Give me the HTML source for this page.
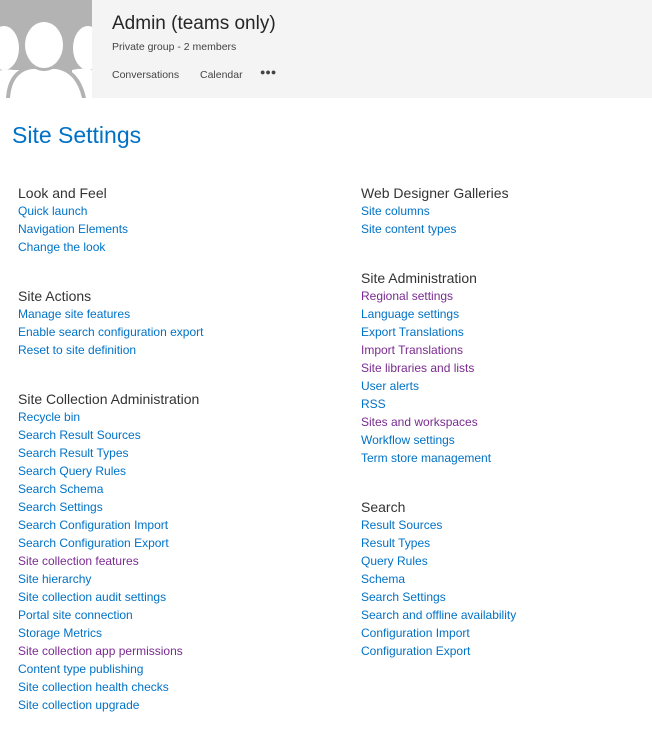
<!DOCTYPE html>
<html><head><meta charset="utf-8"><style>
body{margin:0;width:652px;height:732px;background:#fff;font-family:"Liberation Sans",sans-serif;position:relative;overflow:hidden}
.hdr{position:absolute;left:0;top:0;width:652px;height:98px;background:#f4f4f4}
.t{position:absolute;white-space:nowrap}
.sec{position:absolute;line-height:18px;font-size:12px;color:#0072c6}
.sec h{display:block;font-size:14px;color:#333;}
.sec div{white-space:nowrap}
.p{color:#7a2a90}
</style></head><body>
<div class="hdr"></div>
<svg style="position:absolute;left:0;top:0" width="92" height="98" viewBox="0 0 92 98">
<rect width="92" height="98" fill="#b3b3b3"/>
<ellipse cx="4" cy="48" rx="15" ry="22" fill="#fff"/>
<ellipse cx="88" cy="48" rx="15" ry="22" fill="#fff"/>
<path d="M-10 98 L-10 75 Q0 68 14 70 L20 70 L20 98Z" fill="#fff"/>
<path d="M72 98 L72 70 Q90 66 100 75 L100 98Z" fill="#fff"/>
<path d="M6 98 Q8 70 30 66 L58 66 Q80 70 86 98Z" fill="#b3b3b3"/>
<path d="M10 98 Q12 72 32 69 L56 69 Q76 72 82 98Z" fill="#fff"/>
<ellipse cx="44" cy="45" rx="22" ry="26" fill="#b3b3b3"/>
<ellipse cx="44" cy="45" rx="19" ry="23" fill="#fff"/>
</svg>
<div class="t" style="left:112px;top:13px;font-size:19px;color:#262626">Admin (teams only)</div>
<div class="t" style="left:112px;top:41px;font-size:10.5px;color:#444">Private group - 2 members</div>
<div class="t" style="left:112px;top:69px;font-size:10.5px;color:#444">Conversations</div>
<div class="t" style="left:200px;top:69px;font-size:10.5px;color:#444">Calendar</div>
<div class="t" style="left:260px;top:67px;font-size:9px;color:#444;letter-spacing:0px">●●●</div>
<div class="t" style="left:12px;top:122px;font-size:23px;color:#0072c6">Site Settings</div>

<div class="sec" style="left:18px;top:184px"><h>Look and Feel</h><div>Quick launch</div><div>Navigation Elements</div><div>Change the look</div></div>
<div class="sec" style="left:18px;top:287px"><h>Site Actions</h><div>Manage site features</div><div>Enable search configuration export</div><div>Reset to site definition</div></div>
<div class="sec" style="left:18px;top:390px"><h>Site Collection Administration</h><div>Recycle bin</div><div>Search Result Sources</div><div>Search Result Types</div><div>Search Query Rules</div><div>Search Schema</div><div>Search Settings</div><div>Search Configuration Import</div><div>Search Configuration Export</div><div class="p">Site collection features</div><div>Site hierarchy</div><div>Site collection audit settings</div><div>Portal site connection</div><div>Storage Metrics</div><div class="p">Site collection app permissions</div><div>Content type publishing</div><div>Site collection health checks</div><div>Site collection upgrade</div></div>

<div class="sec" style="left:361px;top:184px"><h>Web Designer Galleries</h><div>Site columns</div><div>Site content types</div></div>
<div class="sec" style="left:361px;top:269px"><h>Site Administration</h><div class="p">Regional settings</div><div>Language settings</div><div>Export Translations</div><div class="p">Import Translations</div><div class="p">Site libraries and lists</div><div>User alerts</div><div>RSS</div><div class="p">Sites and workspaces</div><div>Workflow settings</div><div>Term store management</div></div>
<div class="sec" style="left:361px;top:498px"><h>Search</h><div>Result Sources</div><div>Result Types</div><div>Query Rules</div><div>Schema</div><div>Search Settings</div><div>Search and offline availability</div><div>Configuration Import</div><div>Configuration Export</div></div>
</body></html>
